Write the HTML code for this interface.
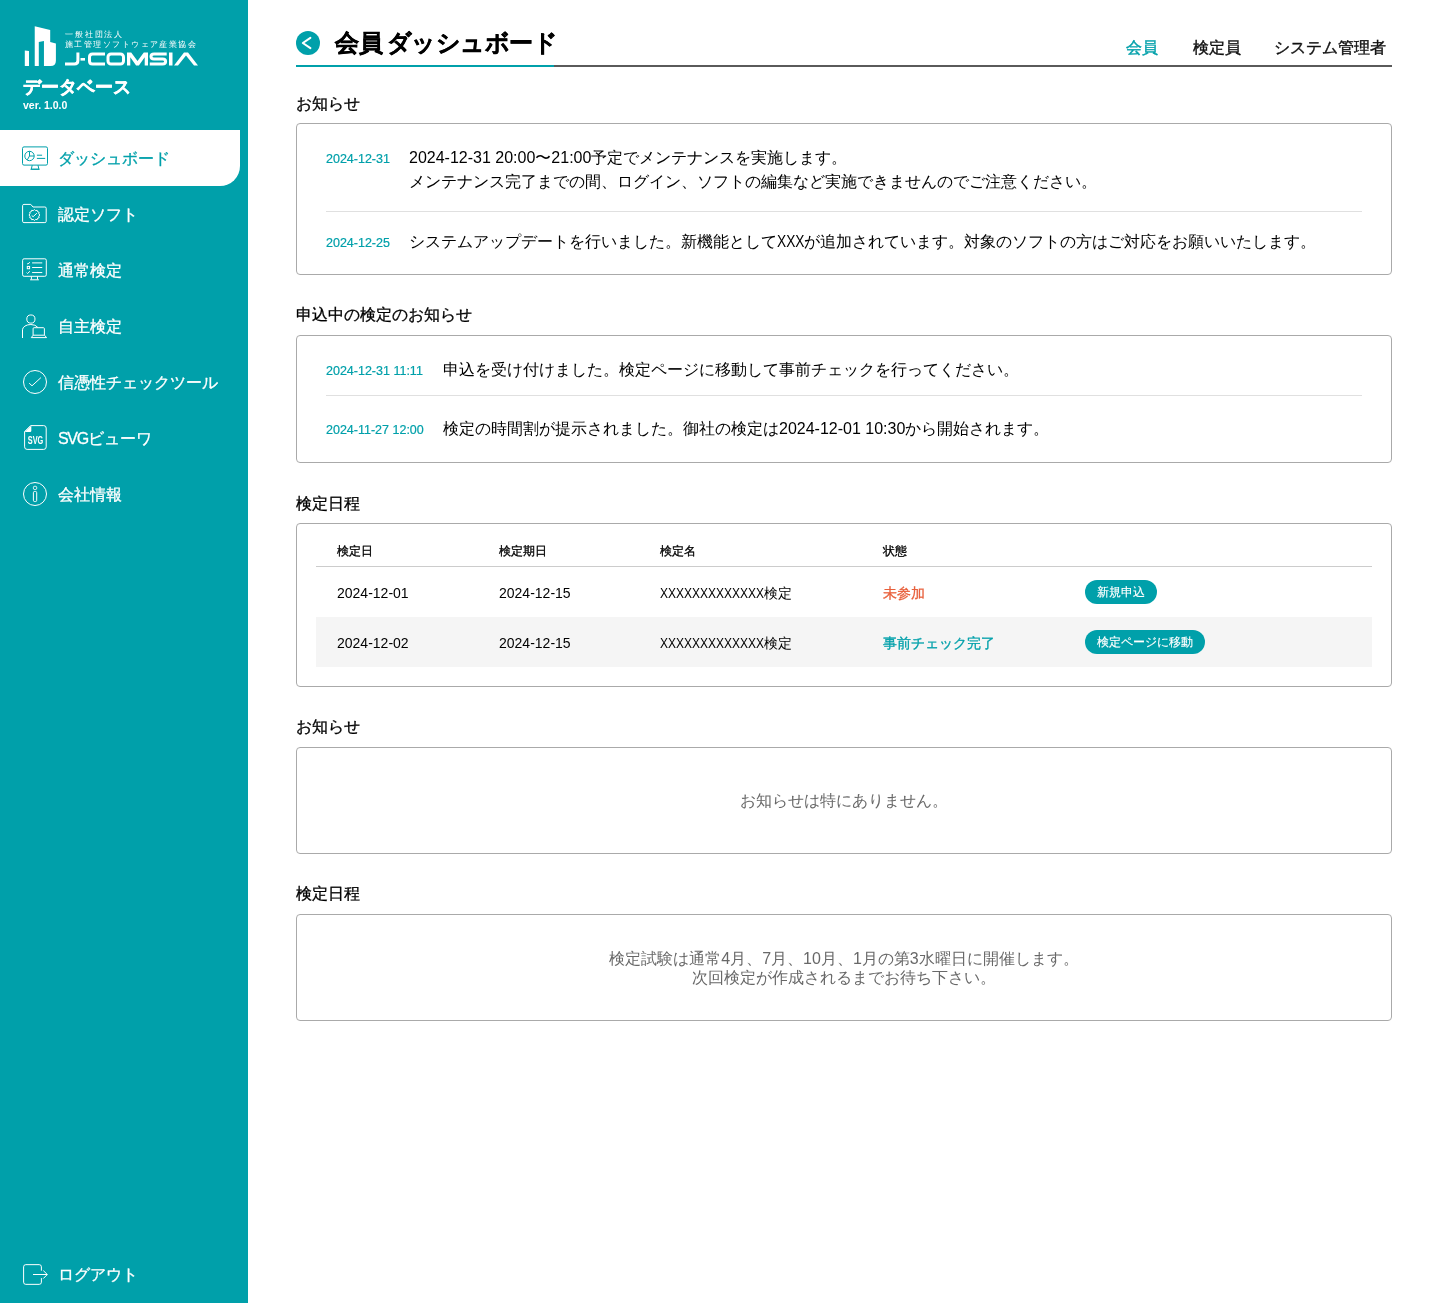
<!DOCTYPE html>
<html lang="ja">
<head>
<meta charset="utf-8">
<title>会員 ダッシュボード</title>
<style>
*{box-sizing:border-box;margin:0;padding:0}
html,body{width:1440px;height:1303px;overflow:hidden;background:#fff}
body{font-family:"Liberation Sans",sans-serif;color:#000;position:relative;font-size:16px}
.side{will-change:transform;position:absolute;left:0;top:0;width:248px;height:1303px;background:#00a0aa;color:#fff}
.logo{position:absolute;left:0;top:0;width:248px;height:120px}
.dbname{position:absolute;left:23px;top:73px;font-size:18px;font-weight:bold;line-height:28px;white-space:nowrap}
.ver{position:absolute;left:23px;top:99px;font-size:10.5px;font-weight:bold;line-height:12px}
.nav{position:absolute;left:0;top:130px;width:248px}
.nav .it{position:relative;height:56px;width:240px;display:block}
.nav .it.on{background:#fff;color:#00a0aa;border-radius:0 0 20px 0}
.nav .it svg{position:absolute;left:21px;top:14px;width:28px;height:28px}
.nav .it span{position:absolute;left:58px;top:1px;line-height:56px;font-size:16px;font-weight:500;white-space:nowrap}
.logout{position:absolute;left:0;top:1246px;width:240px;height:56px}
.logout svg{position:absolute;left:21px;top:14px;width:28px;height:28px}
.logout span{position:absolute;left:58px;top:1px;line-height:56px;font-size:16px;font-weight:500;white-space:nowrap}
.main{will-change:transform;position:absolute;left:296px;top:0;width:1096px}
.hd{position:absolute;left:0;top:0;width:1096px;height:67px;border-bottom:2px solid #5a5a5a}
.hd .tl{position:absolute;left:0;bottom:-2px;width:258px;height:2px;background:#00a0aa}
.hd .back{position:absolute;left:0;top:31px;width:24px;height:24px}
.hd h1{position:absolute;left:39px;top:24px;letter-spacing:-0.5px;word-spacing:-1.5px;font-size:24px;line-height:38px;font-weight:bold;white-space:nowrap}
.tabs{position:absolute;left:0;top:36px;font-size:16px;line-height:24px;font-weight:500;white-space:nowrap;color:#111}
.tabs span{position:absolute;top:0}
.tabs .on{color:#00a0aa}
h2{position:absolute;left:0;font-size:16px;line-height:24px;font-weight:500;white-space:nowrap}
.card{position:absolute;left:0;width:1096px;border:1px solid #aaa;border-radius:4px;background:#fff}
.row{position:absolute;left:29px;right:29px}
.row .d{position:absolute;left:0;top:0.5px;font-size:12.5px;line-height:24px;color:#00a0aa;white-space:nowrap}
.row .t{position:absolute;top:0;font-size:16px;line-height:24px;white-space:nowrap}
.hr{position:absolute;left:29px;right:29px;height:1px;background:#e0e0e0}
.empty{position:absolute;left:0;right:0;text-align:center;color:#686868;font-size:16px;white-space:nowrap}
.tb{position:absolute;left:19px;top:0;width:1056px}
.th{position:absolute;left:0;top:16px;width:1056px;height:27px;border-bottom:1px solid #ccc;font-size:12px;font-weight:500}
.tr{position:absolute;left:0;width:1056px;height:50px;font-size:14px}
.tr.alt{background:#f5f5f5}
.th div,.tr div{position:absolute;top:0;white-space:nowrap}
.th div{line-height:22px}
.tr div{line-height:52px}
.tr .c5{top:13px;line-height:24px}
.c1{left:21px}.c2{left:183px}.c3{left:344px}.c4{left:567px}.c5{left:769px}
.xs{display:inline-block;transform:scaleX(.856);transform-origin:0 50%;margin-right:-17.5px}
.x3{display:inline-block;transform:scaleX(.856);transform-origin:0 50%;margin-right:-4.6px}
.red{color:#e8603c;font-weight:500}
.teal{color:#00a0aa;font-weight:500}
.btn{display:block;height:24px;line-height:24px;padding:0 12px;border-radius:12px;background:#00a0aa;color:#fff;font-size:12px;font-weight:500}
h2,.nav .it span,.logout span,.th,.red,.teal{-webkit-text-stroke:0.3px currentColor}
.btn{-webkit-text-stroke:0.15px currentColor}
.tabs{-webkit-text-stroke:0.4px currentColor}
.hd h1,.dbname{-webkit-text-stroke:0.4px currentColor}
.row .d{-webkit-text-stroke:0.2px currentColor}
</style>
</head>
<body>
<div class="side">
  <svg class="logo" viewBox="0 0 248 120">
    <g fill="#fff">
      <path d="M24.8 50.55 L29 51.1 V66 H24.8 Z"/>
      <path d="M34.74 26.24 L50.2 29.9 V41.9 L55.9 43.4 V60.7 Q55.9 66 50.6 66 H43.95 V41 L38.8 42.1 V66 H34.74 Z"/>
      <rect x="80.5" y="58" width="4.5" height="2.6"/>
      <polygon points="127,65.5 127,52.5 131.2,52.5 137.5,61 143.8,52.5 148,52.5 148,65.5 144.7,65.5 144.7,57.3 138.9,65.5 136.1,65.5 130.3,57.3 130.3,65.5"/>
      <rect x="169" y="52.5" width="3.5" height="13"/>
      <polygon points="174,65.5 184,52.5 188,52.5 198,65.5 194,65.5 186,55.6 178,65.5"/>
    </g>
    <g fill="none" stroke="#fff" stroke-width="3">
      <path d="M77.9 52.5 V60.5 Q77.9 64 74.4 64 H65"/>
      <path d="M105 54 H92.5 Q89.5 54 89.5 57 V61 Q89.5 64 92.5 64 H105"/>
      <rect x="108" y="54" width="15.5" height="10" rx="3"/>
      <path d="M166.7 54 H154 Q151 54 151 56.5 Q151 59 154 59 H162.6 Q165.6 59 165.6 61.5 Q165.6 64 162.6 64 H149.8"/>
    </g>
    <text x="65" y="36.6" font-size="8" letter-spacing="1.85" fill="#fff">一般社団法人</text>
    <text x="65" y="47" font-size="8" letter-spacing="1.44" fill="#fff">施工管理ソフトウェア産業協会</text>
  </svg>
  <div class="dbname">データベース</div>
  <div class="ver">ver. 1.0.0</div>
  <div class="nav">
    <a class="it on"><svg viewBox="0 0 28 28" fill="none" stroke="currentColor" stroke-width="1"><rect x="1.5" y="2.9" width="25" height="18.2" rx="1.5"/><path d="M11.2 21.2 L10.3 25.2 H17.9 L17 21.2 M9.5 25.3 H18.6"/><circle cx="8.5" cy="12" r="4.7"/><path d="M8.5 7.3 V12 H13.2 M8.5 12 L6.3 15.9 M15.9 11.2 H21.1 M15.9 14.4 H24.2"/></svg><span>ダッシュボード</span></a>
    <a class="it"><svg viewBox="0 0 28 28" fill="none" stroke="currentColor" stroke-width="1"><path d="M2.9 4.4 H9.8 L12 7 H23.9 Q25.2 7 25.2 8.3 V21.3 Q25.2 22.6 23.9 22.6 H2.9 Q1.6 22.6 1.6 21.3 V5.7 Q1.6 4.4 2.9 4.4 Z"/><path d="M12.22 10.61Q13.40 8.50 14.58 10.61Q16.65 9.37 16.62 11.78Q19.03 11.75 17.79 13.82Q19.90 15.00 17.79 16.18Q19.03 18.25 16.62 18.22Q16.65 20.63 14.58 19.39Q13.40 21.50 12.22 19.39Q10.15 20.63 10.18 18.22Q7.77 18.25 9.01 16.18Q6.90 15.00 9.01 13.82Q7.77 11.75 10.18 11.78Q10.15 9.37 12.22 10.61Z"/><path d="M10.7 15.5 L12.1 16.7 L15.9 13.2"/></svg><span>認定ソフト</span></a>
    <a class="it"><svg viewBox="0 0 28 28" fill="none" stroke="currentColor" stroke-width="1"><rect x="1.6" y="2.8" width="23.7" height="17.5" rx="1.5"/><path d="M10.4 20.4 V23.5 M16.5 20.4 V23.5 M9.1 23.8 H17.9"/><path d="M11.1 6.9 H21.25 M11.1 11.5 H21.25 M11.1 16.55 H21.25"/><path d="M6 7.3 L6.8 8 L8.9 6.3 M5.6 16.6 L6.5 17.5 L8.9 15.3"/><rect x="6.3" y="10.4" width="2.3" height="2.3"/></svg><span>通常検定</span></a>
    <a class="it"><svg viewBox="0 0 28 28" fill="none" stroke="currentColor" stroke-width="1"><circle cx="9.9" cy="7.05" r="4.1"/><path d="M1.5 26 V17.8 A8.4 5.3 0 0 1 9.9 12.5 Q14.4 12.5 16.8 15.4"/><path d="M12.1 23.2 V16.7 Q12.1 15.7 13.1 15.7 H22.4 Q23.4 15.7 23.4 16.7 V23.2 Z"/><path d="M12.1 23.2 L10.3 25.6 H25.6 L23.5 23.2"/></svg><span>自主検定</span></a>
    <a class="it"><svg viewBox="0 0 28 28" fill="none" stroke="currentColor" stroke-width="1"><circle cx="14" cy="14" r="11.5"/><path d="M8.2 15.2 L11 17.8 L19.9 9.65"/></svg><span>信憑性チェックツール</span></a>
    <a class="it"><svg viewBox="0 0 28 28" fill="none" stroke="currentColor" stroke-width="1"><path d="M9.6 1.6 H22.7 Q25.2 1.6 25.2 4.1 V22.9 Q25.2 25.4 22.7 25.4 H6.1 Q3.6 25.4 3.6 22.9 V7.6 Z"/><path d="M3.6 7.9 L10.3 1.6 V6.7 Q10.3 7.9 9.1 7.9 Z" fill="currentColor" stroke="none"/><text x="6.8" y="20" font-size="10.4" font-weight="bold" textLength="15.5" lengthAdjust="spacingAndGlyphs" fill="currentColor" stroke="none">SVG</text></svg><span><i style="font-style:normal;letter-spacing:-1.3px">SVG</i>ビューワ</span></a>
    <a class="it"><svg viewBox="0 0 28 28" fill="none" stroke="currentColor" stroke-width="1"><circle cx="14" cy="14" r="11.5"/><rect x="12.4" y="6.3" width="3.3" height="3.2" rx="1.2"/><rect x="12.4" y="11.4" width="3.3" height="10.2" rx="1.3"/></svg><span>会社情報</span></a>
  </div>
  <div class="logout"><svg viewBox="0 0 28 28" fill="none" stroke="currentColor" stroke-width="1"><path d="M20.4 10.7 V6.85 Q20.4 4.65 18.2 4.65 H4.8 Q2.6 4.65 2.6 6.85 V22.15 Q2.6 24.35 4.8 24.35 H18.2 Q20.4 24.35 20.4 22.15 V18.1"/><path d="M12 14.5 H26.3 M22.3 10.6 L26.3 14.5 L22.3 18.55"/></svg><span>ログアウト</span></div>
</div>
<div class="main">
  <div class="hd">
    <svg class="back" viewBox="0 0 24 24"><circle cx="12" cy="12" r="12" fill="#00a0aa"/><path d="M14.4 6.9 L6.8 12 L14.4 17.1" fill="none" stroke="#fff" stroke-width="2" stroke-linecap="round" stroke-linejoin="round"/></svg>
    <h1>会員 ダッシュボード</h1>
    <div class="tabs"><span class="on" style="left:830px">会員</span><span style="left:897px">検定員</span><span style="left:978px">システム管理者</span></div>
    <div class="tl"></div>
  </div>

  <h2 style="top:92px">お知らせ</h2>
  <div class="card" style="top:123px;height:152px">
    <div class="row" style="top:22px"><div class="d">2024-12-31</div><div class="t" style="left:83px">2024-12-31 20:00〜21:00予定でメンテナンスを実施します。<br>メンテナンス完了までの間、ログイン、ソフトの編集など実施できませんのでご注意ください。</div></div>
    <div class="hr" style="top:87px"></div>
    <div class="row" style="top:106px"><div class="d">2024-12-25</div><div class="t" style="left:83px">システムアップデートを行いました。新機能として<span class="x3">XXX</span>が追加されています。対象のソフトの方はご対応をお願いいたします。</div></div>
  </div>

  <h2 style="top:303px">申込中の検定のお知らせ</h2>
  <div class="card" style="top:335px;height:128px">
    <div class="row" style="top:22px"><div class="d">2024-12-31 11:11</div><div class="t" style="left:117px">申込を受け付けました。検定ページに移動して事前チェックを行ってください。</div></div>
    <div class="hr" style="top:59px"></div>
    <div class="row" style="top:81px"><div class="d">2024-11-27 12:00</div><div class="t" style="left:117px">検定の時間割が提示されました。御社の検定は2024-12-01 10:30から開始されます。</div></div>
  </div>

  <h2 style="top:492px">検定日程</h2>
  <div class="card" style="top:523px;height:164px">
    <div class="tb">
      <div class="th"><div class="c1">検定日</div><div class="c2">検定期日</div><div class="c3">検定名</div><div class="c4">状態</div></div>
      <div class="tr" style="top:43px"><div class="c1">2024-12-01</div><div class="c2">2024-12-15</div><div class="c3"><span class="xs">XXXXXXXXXXXXX</span>検定</div><div class="c4 red">未参加</div><div class="c5"><span class="btn">新規申込</span></div></div>
      <div class="tr alt" style="top:93px"><div class="c1">2024-12-02</div><div class="c2">2024-12-15</div><div class="c3"><span class="xs">XXXXXXXXXXXXX</span>検定</div><div class="c4 teal">事前チェック完了</div><div class="c5"><span class="btn">検定ページに移動</span></div></div>
    </div>
  </div>

  <h2 style="top:715px">お知らせ</h2>
  <div class="card" style="top:747px;height:107px">
    <div class="empty" style="top:41px;line-height:24px">お知らせは特にありません。</div>
  </div>

  <h2 style="top:882px">検定日程</h2>
  <div class="card" style="top:914px;height:107px">
    <div class="empty" style="top:34px;line-height:19px">検定試験は通常4月、7月、10月、1月の第3水曜日に開催します。<br>次回検定が作成されるまでお待ち下さい。</div>
  </div>
</div>
</body>
</html>
